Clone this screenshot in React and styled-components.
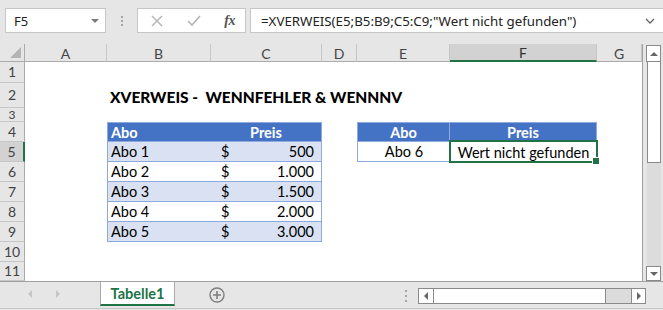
import React from "react";
import styled, { createGlobalStyle } from "styled-components";

const GlobalStyle = createGlobalStyle`
  html, body {
    margin: 0;
    padding: 0;
    background: #e6e6e6;
    overflow: hidden;
  }
  * { box-sizing: border-box; }
`;

const GREEN = "#217346";
const BLUE = "#4472c4";
const BAND = "#d9e1f2";
const LINE = "#8ea9db";

const Window = styled.div`
  width: 663px;
  height: 310px;
  display: flex;
  flex-direction: column;
  background: #e6e6e6;
  font-family: Lato, "Liberation Sans", sans-serif;
`;

/* ---------- formula bar ---------- */
const FormulaBar = styled.div`
  height: 44px;
  display: flex;
  align-items: flex-start;
  padding: 8px 0 0 5px;
`;
const NameBox = styled.div`
  width: 101px;
  height: 25px;
  background: #fff;
  border: 1px solid #c6c6c6;
  display: flex;
  align-items: center;
  justify-content: space-between;
  padding: 0 6px 0 8px;
  font: 13px "Noto Sans", sans-serif;
  color: #222;
`;
const DropTriangle = styled.span`
  width: 0;
  height: 0;
  border-left: 4px solid transparent;
  border-right: 4px solid transparent;
  border-top: 4px solid #7a7a7a;
`;
const Grip = styled.div`
  width: 31px;
  height: 25px;
  display: flex;
  flex-direction: column;
  align-items: center;
  justify-content: center;
  gap: 2px;
  & > i {
    width: 2px;
    height: 2px;
    background: #a6a6a6;
  }
`;
const FxButtons = styled.div`
  width: 109px;
  height: 25px;
  background: #fff;
  border: 1px solid #c6c6c6;
  display: flex;
  align-items: center;
  padding: 0 10px 0 13px;
  justify-content: space-between;
`;
const FxLabel = styled.span`
  font: italic bold 14px "Liberation Serif", serif;
  color: #555;
  letter-spacing: -0.5px;
`;
const FormulaInput = styled.div`
  flex: 1;
  height: 25px;
  margin-left: 4px;
  background: #fff;
  border: 1px solid #c6c6c6;
  border-right: none;
  display: flex;
  align-items: center;
  justify-content: space-between;
  padding: 0 8px 0 10px;
  font: 13.3px "Noto Sans", sans-serif;
  color: #222;
  white-space: nowrap;
`;

/* ---------- sheet grid ---------- */
const COLS = [
  { k: "A", w: 82 },
  { k: "B", w: 104 },
  { k: "C", w: 111 },
  { k: "D", w: 35 },
  { k: "E", w: 93 },
  { k: "F", w: 147 },
  { k: "G", w: 45 },
];
const ROWS = [21, 25, 14, 20, 20, 20, 20, 20, 20, 20, 19];

const Sheet = styled.div`
  display: grid;
  grid-template-columns: 25px ${COLS.map((c) => c.w + "px").join(" ")} 21px;
  grid-template-rows: 18px ${ROWS.map((h) => h + "px").join(" ")};
  background: #fff;
`;

const Corner = styled.div`
  background: #e6e6e6;
  border-right: 1px solid #ababab;
  border-bottom: 1px solid #ababab;
  position: relative;
  &::after {
    content: "";
    position: absolute;
    right: 3px;
    bottom: 3px;
    width: 0;
    height: 0;
    border-left: 11px solid transparent;
    border-bottom: 11px solid #b4b4b4;
  }
`;
const ColHead = styled.div`
  background: ${(p) => (p.$active ? "#d2d2d2" : "#e6e6e6")};
  border-right: 1px solid #c6c6c6;
  border-bottom: ${(p) => (p.$active ? `2px solid ${GREEN}` : "1px solid #ababab")};
  display: flex;
  align-items: center;
  justify-content: center;
  font-size: 14px;
  color: ${(p) => (p.$active ? "#333" : "#444")};
  padding-top: 1px;
`;
const RowHead = styled.div`
  background: ${(p) => (p.$active ? "#d2d2d2" : "#e6e6e6")};
  border-bottom: 1px solid #c6c6c6;
  border-right: ${(p) => (p.$active ? `2px solid ${GREEN}` : "1px solid #ababab")};
  display: flex;
  align-items: center;
  justify-content: center;
  font-size: ${(p) => (p.$short ? 12 : 14)}px;
  color: #444;
  overflow: hidden;
  line-height: 1;
`;

const fills = { head: BLUE, band: BAND, plain: "#fff", none: "transparent" };

const Cell = styled.div`
  position: relative;
  background: ${(p) => fills[p.$fill || "none"]};
  color: ${(p) => (p.$fill === "head" ? "#fff" : "#000")};
  font-size: 14.5px;
  font-weight: ${(p) => (p.$fill === "head" ? 700 : 400)};
  display: flex;
  align-items: center;
  justify-content: ${(p) =>
    p.$align === "center" ? "center" : p.$align === "split" ? "space-between" : "flex-start"};
  padding: ${(p) => (p.$align === "split" ? "0 7px 0 10px" : "0 3px")};
  white-space: nowrap;
  border-top: ${(p) => (p.$top ? `1px solid ${LINE}` : "none")};
  border-bottom: ${(p) => (p.$bottom ? `1px solid ${LINE}` : "none")};
  border-left: ${(p) => (p.$left ? `1px solid ${LINE}` : "none")};
  border-right: ${(p) => (p.$right ? `1px solid ${LINE}` : "none")};
`;
const Title = styled.span`
  font-size: 15.5px;
  font-weight: 900;
  color: #000;
  padding-top: 3px;
  white-space: pre;
  position: relative;
  z-index: 1;
`;
const Selection = styled.div`
  position: absolute;
  left: -1px;
  top: -2px;
  right: -1px;
  bottom: -1px;
  border: 2px solid ${GREEN};
  pointer-events: none;
  &::after {
    content: "";
    position: absolute;
    right: -4px;
    bottom: -4px;
    width: 6px;
    height: 6px;
    background: ${GREEN};
    border: 1px solid #fff;
  }
`;

/* ---------- scrollbars ---------- */
const VScroll = styled.div`
  grid-column: 9;
  grid-row: 1 / -1;
  background: #e6e6e6;
  border-left: 1px solid #a0a0a0;
  display: flex;
  flex-direction: column;
  padding: 1px 2px 0 3px;
`;
const ArrowBox = styled.div`
  width: ${(p) => p.$w || 15}px;
  height: ${(p) => p.$h || 17}px;
  flex-shrink: 0;
  background: #fff;
  border: 1px solid #8a8a8a;
  display: flex;
  align-items: center;
  justify-content: center;
`;
const Tri = styled.span`
  width: 0;
  height: 0;
  ${(p) =>
    p.$dir === "up"
      ? `border-left:4px solid transparent;border-right:4px solid transparent;border-bottom:4px solid #666;`
      : p.$dir === "down"
      ? `border-left:4px solid transparent;border-right:4px solid transparent;border-top:4px solid #666;`
      : p.$dir === "left"
      ? `border-top:4px solid transparent;border-bottom:4px solid transparent;border-right:4px solid ${p.$c || "#666"};`
      : `border-top:4px solid transparent;border-bottom:4px solid transparent;border-left:4px solid ${p.$c || "#666"};`}
`;
const VThumb = styled.div`
  height: 101px;
  margin: 0 0 0 1px;
  width: 14px;
  background: #fff;
  border: 1px solid #8a8a8a;
  border-top: none;
`;
const VTrack = styled.div`
  flex: 1;
  background: #dcdcdc;
  margin-left: 1px;
  width: 14px;
`;

/* ---------- tab bar ---------- */
const TabBar = styled.div`
  flex: 1;
  display: flex;
  align-items: flex-start;
  border-top: 1px solid #a0a0a0;
  border-bottom: 1px solid #c6c6c6;
  margin-bottom: 1px;
`;
const TabNav = styled.div`
  width: 100px;
  height: 24px;
  display: flex;
  align-items: center;
  gap: 24px;
  padding-left: 28px;
`;
const Tab = styled.div`
  width: 75px;
  height: 24px;
  background: #fff;
  border-left: 1px solid #ababab;
  border-right: 1px solid #ababab;
  border-bottom: 2px solid ${GREEN};
  display: flex;
  align-items: center;
  justify-content: center;
  color: ${GREEN};
  font-weight: 700;
  font-size: 14.5px;
`;
const AddSheet = styled.div`
  width: 16px;
  height: 16px;
  margin: 5px 0 0 34px;
`;
const HGrip = styled(Grip)`
  width: 10px;
  height: 13px;
  margin: 7px 0 0 176px;
  gap: 3px;
`;
const HScroll = styled.div`
  width: 228px;
  height: 16px;
  margin: 6px 0 0 7px;
  display: flex;
  border: 1px solid #8a8a8a;
  background: #dcdcdc;
`;
const HThumb = styled.div`
  width: 173px;
  background: #fff;
  border-left: 1px solid #8a8a8a;
  border-right: 1px solid #8a8a8a;
`;
const HButton = styled.div`
  width: 14px;
  background: #fff;
  display: flex;
  align-items: center;
  justify-content: center;
  border-left: ${(p) => (p.$end ? "1px solid #8a8a8a" : "none")};
`;
const HTrack = styled.div`
  flex: 1;
`;

/* ---------- data ---------- */
const prices = [
  ["Abo 1", "500"],
  ["Abo 2", "1.000"],
  ["Abo 3", "1.500"],
  ["Abo 4", "2.000"],
  ["Abo 5", "3.000"],
];

function buildCells() {
  const cells = {};
  cells.B2 = { title: "XVERWEIS -  WENNFEHLER & WENNNV" };
  cells.B4 = { v: "Abo", fill: "head", top: true, left: true, bottom: true };
  cells.C4 = { v: "Preis", fill: "head", align: "center", top: true, right: true, bottom: true };
  prices.forEach(([abo, price], i) => {
    const r = 5 + i;
    const fill = i % 2 === 0 ? "band" : "plain";
    cells["B" + r] = { v: abo, fill, left: true, bottom: true };
    cells["C" + r] = { v: ["$", price], fill, align: "split", right: true, bottom: true };
  });
  cells.E4 = { v: "Abo", fill: "head", align: "center", top: true, left: true, right: true, bottom: true };
  cells.F4 = { v: "Preis", fill: "head", align: "center", top: true, right: true, bottom: true };
  cells.E5 = { v: "Abo 6", fill: "plain", align: "center", left: true, bottom: true };
  cells.F5 = { v: "Wert nicht gefunden", fill: "plain", align: "center", selected: true };
  return cells;
}
const CELLS = buildCells();

function SheetCell({ id }) {
  const c = CELLS[id];
  if (!c) return <Cell />;
  if (c.title) {
    return (
      <Cell>
        <Title>{c.title}</Title>
      </Cell>
    );
  }
  return (
    <Cell
      $fill={c.fill}
      $align={c.align}
      $top={c.top}
      $bottom={c.bottom}
      $left={c.left}
      $right={c.right}
    >
      {Array.isArray(c.v) ? c.v.map((t) => <span key={t}>{t}</span>) : c.v}
      {c.selected && <Selection />}
    </Cell>
  );
}

function XIcon() {
  return (
    <svg width="12" height="12" viewBox="0 0 12 12">
      <path d="M1 1 L11 11 M11 1 L1 11" stroke="#b4b4b4" strokeWidth="1.4" fill="none" />
    </svg>
  );
}
function CheckIcon() {
  return (
    <svg width="14" height="12" viewBox="0 0 14 12">
      <path d="M1 6 L5 10 L13 1" stroke="#b4b4b4" strokeWidth="1.6" fill="none" />
    </svg>
  );
}
function Chevron() {
  return (
    <svg width="10" height="6" viewBox="0 0 10 6">
      <path d="M1 1 L5 5 L9 1" stroke="#666" strokeWidth="1.3" fill="none" />
    </svg>
  );
}
function PlusCircle() {
  return (
    <svg width="16" height="16" viewBox="0 0 16 16">
      <circle cx="8" cy="8" r="7" stroke="#7f7f7f" strokeWidth="1.4" fill="none" />
      <path d="M8 4 V12 M4 8 H12" stroke="#7f7f7f" strokeWidth="1.6" />
    </svg>
  );
}

export default function App() {
  return (
    <>
      <GlobalStyle />
      <Window>
        <FormulaBar>
          <NameBox>
            F5
            <DropTriangle />
          </NameBox>
          <Grip>
            <i />
            <i />
            <i />
          </Grip>
          <FxButtons>
            <XIcon />
            <CheckIcon />
            <FxLabel>fx</FxLabel>
          </FxButtons>
          <FormulaInput>
            =XVERWEIS(E5;B5:B9;C5:C9;"Wert nicht gefunden")
            <Chevron />
          </FormulaInput>
        </FormulaBar>

        <Sheet>
          <Corner />
          {COLS.map((c) => (
            <ColHead key={c.k} $active={c.k === "F"}>
              {c.k}
            </ColHead>
          ))}
          <VScroll>
            <ArrowBox>
              <Tri $dir="up" />
            </ArrowBox>
            <VThumb />
            <VTrack />
            <ArrowBox $h={15}>
              <Tri $dir="down" />
            </ArrowBox>
          </VScroll>
          {ROWS.map((h, i) => {
            const r = i + 1;
            return (
              <React.Fragment key={r}>
                <RowHead $active={r === 5} $short={h < 18}>
                  {r}
                </RowHead>
                {COLS.map((c) => (
                  <SheetCell key={c.k + r} id={c.k + r} />
                ))}
              </React.Fragment>
            );
          })}
        </Sheet>

        <TabBar>
          <TabNav>
            <Tri $dir="left" $c="#c6c6c6" />
            <Tri $dir="right" $c="#c6c6c6" />
          </TabNav>
          <Tab>Tabelle1</Tab>
          <AddSheet>
            <PlusCircle />
          </AddSheet>
          <HGrip>
            <i />
            <i />
            <i />
          </HGrip>
          <HScroll>
            <HButton>
              <Tri $dir="left" />
            </HButton>
            <HThumb />
            <HTrack />
            <HButton $end>
              <Tri $dir="right" />
            </HButton>
          </HScroll>
        </TabBar>
      </Window>
    </>
  );
}
